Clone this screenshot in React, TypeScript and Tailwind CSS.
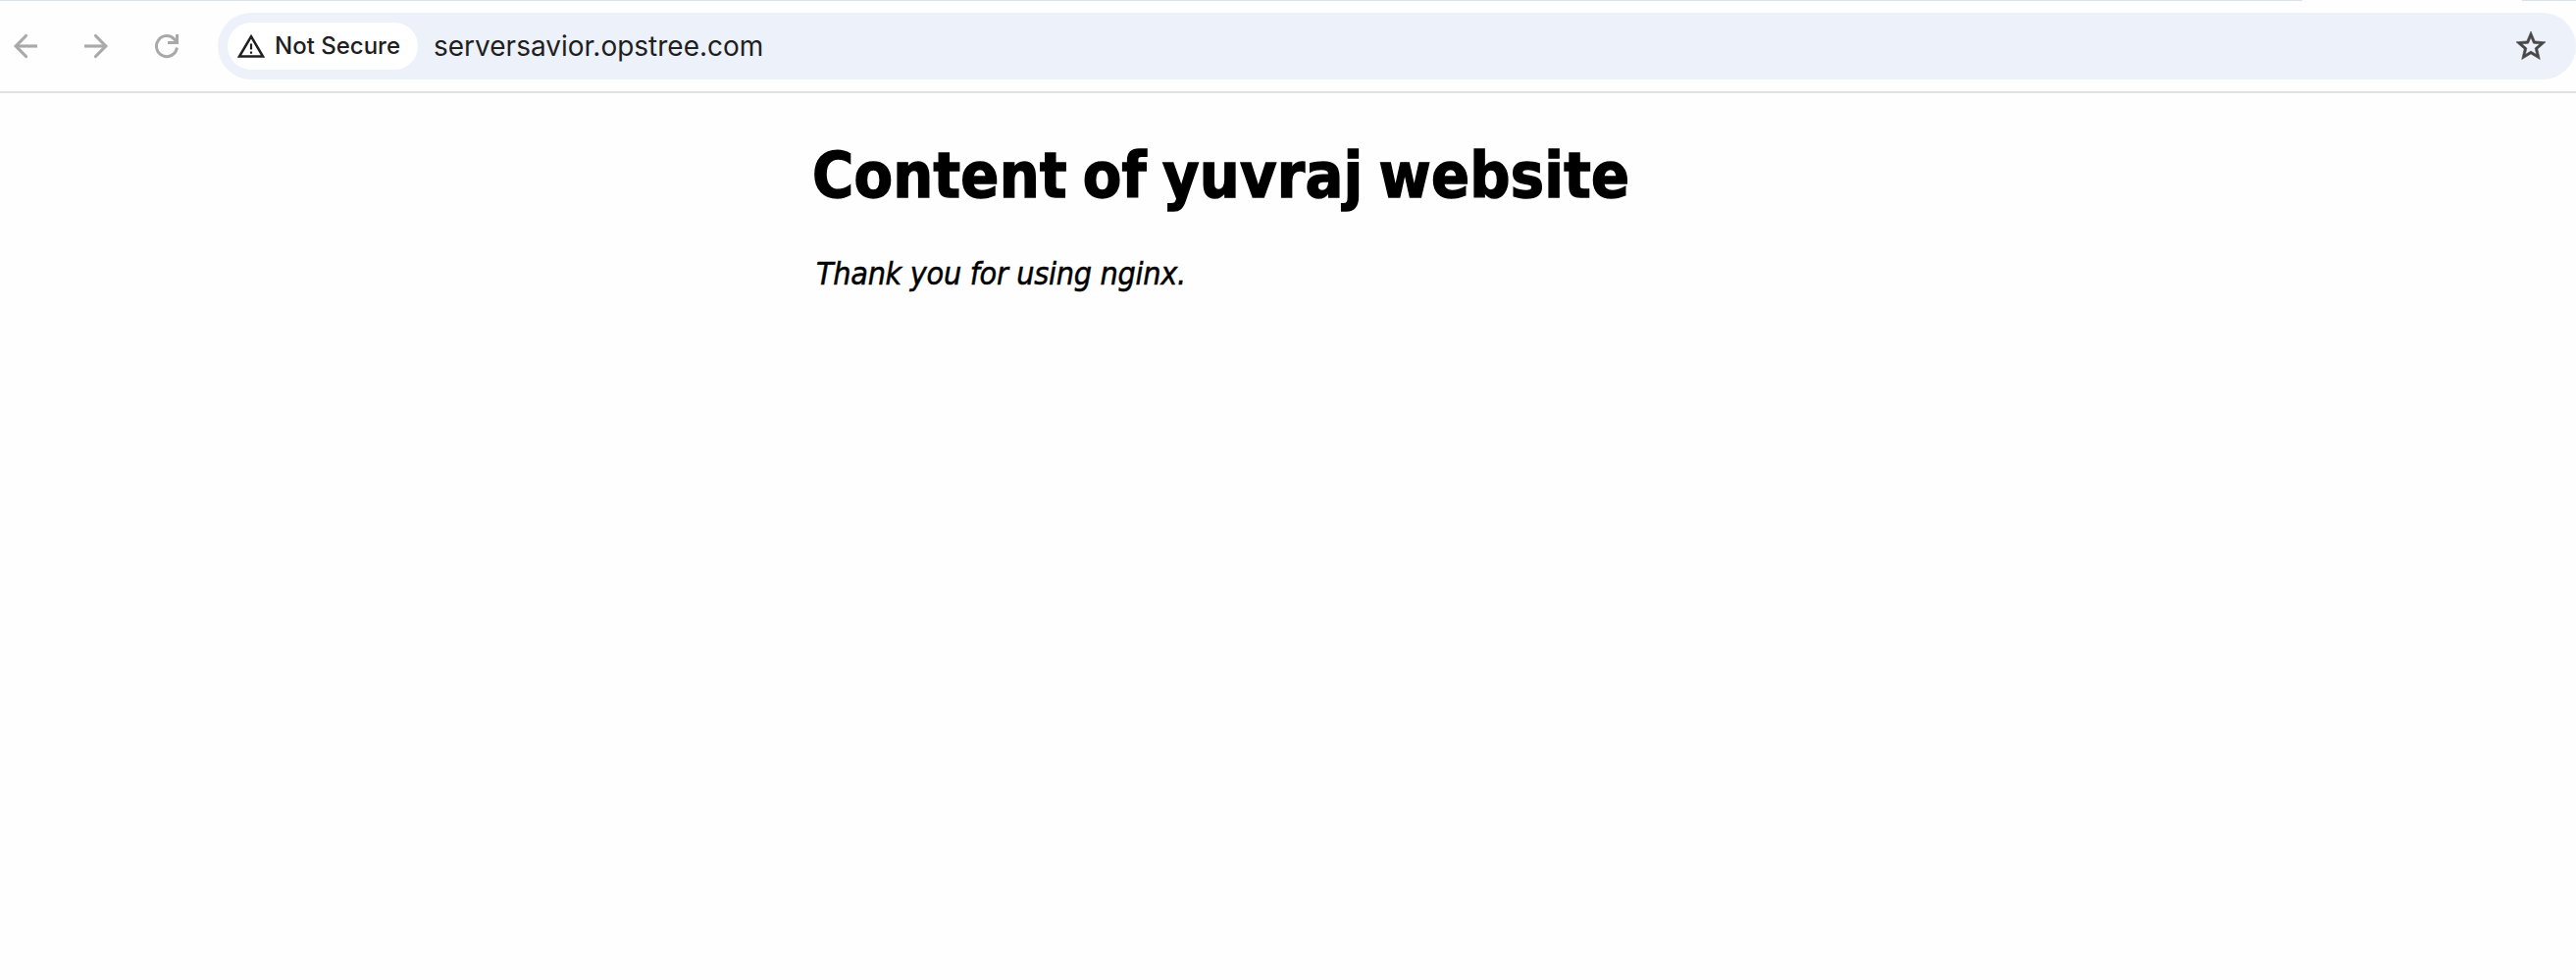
function BackIcon() {
  return (
    <svg width="36" height="36" viewBox="0 0 36 36" fill="none" stroke="#a9a9a9" strokeWidth="3.2">
      <path d="M30 18H8.500" />
      <path d="M18.500 7.500 8.200 18l10.300 10.500" strokeLinejoin="miter" strokeLinecap="round" />
    </svg>
  );
}

function ForwardIcon() {
  return (
    <svg width="36" height="36" viewBox="0 0 36 36" fill="none" stroke="#a9a9a9" strokeWidth="3.2">
      <path d="M6 18h21.500" />
      <path d="M17.500 7.500 27.800 18 17.500 28.500" strokeLinejoin="miter" strokeLinecap="round" />
    </svg>
  );
}

function ReloadIcon() {
  return (
    <svg width="36" height="36" viewBox="0 0 36 36" fill="none" stroke="#a9a9a9" strokeWidth="3">
      <path d="M28.400 19.500A10.500 10.500 0 1 1 25.900 11.200l1.500 1.800" />
      <path d="M28.500 6v8.500h-9.500" />
    </svg>
  );
}

function WarningIcon() {
  return (
    <svg width="30" height="26" viewBox="0 0 30 26" fill="none">
      <path d="M15 3.200 27 23.500H3Z" stroke="#1f1f1f" strokeWidth="2.500" />
      <path d="M13.900 10.500h2.200v6h-2.200zM13.900 18.500h2.200v2.200h-2.200z" fill="#1f1f1f" />
    </svg>
  );
}

function StarIcon() {
  return (
    <svg width="36" height="36" viewBox="0 0 24 24" fill="#474747" stroke="#474747" strokeWidth="0.400">
      <path d="M22 9.24l-7.19-.62L12 2 9.19 8.63 2 9.24l5.46 4.73L5.82 21 12 17.27 18.18 21l-1.63-7.03L22 9.24zM12 15.4l-3.76 2.27 1-4.28-3.32-2.88 4.38-.38L12 6.1l1.71 4.04 4.38.38-3.32 2.88 1 4.28L12 15.4z" />
    </svg>
  );
}

function Toolbar() {
  return (
    <header className="border-b-2 border-[#e0e0e0]">
      <div className="flex h-px justify-between">
        <div className="w-[2347px] bg-[#dbe1e7]" />
        <div className="w-[55px] bg-[#dbe1e7]" />
      </div>
      <div className="flex h-[92px] items-center pl-2">
        <nav className="flex w-[214px] shrink-0 gap-9">
          <BackIcon />
          <ForwardIcon />
          <ReloadIcon />
        </nav>
        <div className="flex h-[68px] grow items-center rounded-full bg-[#edf1f9] pr-7 pl-2.5">
          <div className="flex h-12 w-[194px] items-center rounded-full bg-white pl-[9px]">
            <WarningIcon />
            <span className="ml-[9px] font-['Inter',sans-serif] text-2xl font-medium whitespace-nowrap text-[#1f1f1f]">
              Not Secure
            </span>
          </div>
          <span className="ml-4 grow font-['Inter',sans-serif] text-[28px] whitespace-nowrap text-[#1f1f1f]">
            serversavior.opstree.com
          </span>
          <StarIcon />
        </div>
      </div>
    </header>
  );
}

export default function App() {
  return (
    <div className="h-[999px] overflow-hidden bg-[#fefefe]">
      <Toolbar />
      <main className="ml-[828px] pt-[45px] font-['DejaVu_Sans_Condensed','DejaVu_Sans',sans-serif] text-black">
        <h1 className="text-[64px] leading-[78px] font-bold tracking-[0.25px] [word-spacing:-4.2px] whitespace-nowrap [-webkit-text-stroke:1.4px_black]">
          Content of yuvraj website
        </h1>
        <p className="mt-[42px] ml-[4px] text-[32px] leading-[39px] tracking-[-0.28px] whitespace-nowrap italic [-webkit-text-stroke:0.5px_black]">
          Thank you for using nginx.
        </p>
      </main>
    </div>
  );
}
